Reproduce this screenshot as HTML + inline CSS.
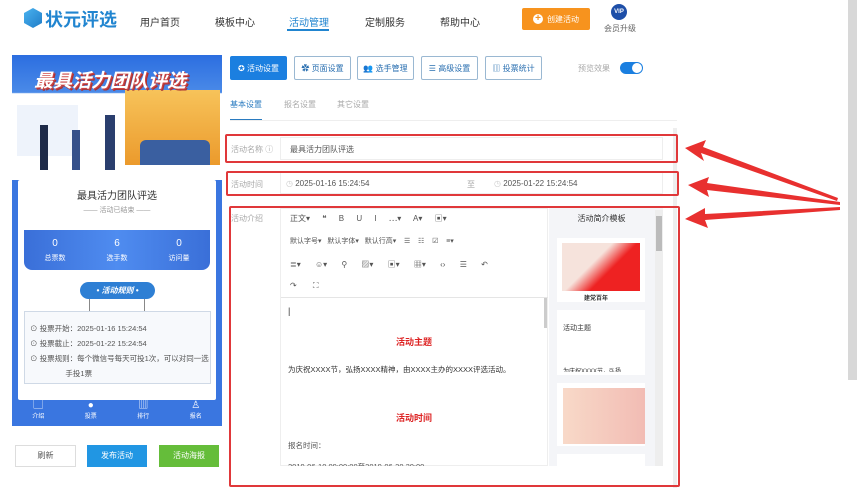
<!DOCTYPE html>
<html><head><meta charset="utf-8"><style>
*{box-sizing:border-box;margin:0;padding:0}
body{width:857px;height:500px;overflow:hidden;background:#fff;font-family:"Liberation Sans","Noto Sans CJK SC",sans-serif;position:relative;color:#333}
.a{position:absolute}
.nav{font-size:10px;color:#333}
.tb{position:absolute;top:56px;height:24px;border:1px solid #9ab8d2;border-radius:2px;font-size:8px;color:#2a6fb0;display:flex;align-items:center;justify-content:center;gap:4px;background:#fff}
.rb{position:absolute;border:2px solid #e0383a;border-radius:2px}
.lbl{font-size:8px;color:#aaa}
.ed{font-size:8px;color:#555}
</style></head><body>
<div class="a" style="left:24px;top:8px;width:18px;height:20px;background:linear-gradient(135deg,#4ab3ef,#1f7cc8);clip-path:polygon(50% 0,100% 25%,100% 75%,50% 100%,0 75%,0 25%)"></div>
<div class="a" style="left:45px;top:6px;font-size:18px;font-weight:bold;color:#2185d0">状元评选</div>
<div class="a nav" style="left:140px;top:14px">用户首页</div>
<div class="a nav" style="left:215px;top:14px">模板中心</div>
<div class="a nav" style="left:289px;top:14px;color:#2185d0">活动管理</div>
<div class="a" style="left:287px;top:29px;width:42px;height:2px;background:#2185d0"></div>
<div class="a nav" style="left:365px;top:14px">定制服务</div>
<div class="a nav" style="left:440px;top:14px">帮助中心</div>
<div class="a" style="left:522px;top:8px;width:68px;height:22px;background:#f7931e;border-radius:2px;color:#fff;font-size:8px;display:flex;align-items:center;justify-content:center;gap:4px"><span style="width:10px;height:10px;border-radius:50%;background:#fff;color:#f7931e;font-size:10px;line-height:10px;text-align:center;font-weight:bold">+</span>创建活动</div>
<div class="a" style="left:611px;top:4px;width:16px;height:16px;border-radius:50%;background:#1e4fa8;color:#fff;font-size:6px;text-align:center;line-height:16px;font-weight:bold">VIP</div>
<div class="a" style="left:604px;top:23px;font-size:8px;color:#666">会员升级</div>
<div class="a" style="left:848px;top:0;width:9px;height:380px;background:#d8d8d8"></div>

<div class="a" style="left:12px;top:55px;width:210px;height:371px;background:#3a76e0"></div>
<div class="a" style="left:12px;top:55px;width:210px;height:125px;background:linear-gradient(180deg,#2c6ee0 0%,#4a8ae8 30%,#fff 31%)"></div>
<div class="a" style="left:125px;top:90px;width:95px;height:75px;background:linear-gradient(180deg,#f7c35a,#eb9a2c)"></div>
<div class="a" style="left:15px;top:103px;width:65px;height:55px;background:#eef3fb;border:2px solid #fff"></div>
<div class="a" style="left:34px;top:66px;font-size:19px;font-weight:bold;font-style:italic;color:#fff;text-shadow:1px 1px 0 #c44,2px 2px 0 #a33">最具活力团队评选</div>
<div class="a" style="left:40px;top:125px;width:8px;height:45px;background:#1e2a48"></div>
<div class="a" style="left:72px;top:130px;width:8px;height:40px;background:#35508a"></div>
<div class="a" style="left:105px;top:115px;width:10px;height:55px;background:#2a3e6e"></div>
<div class="a" style="left:140px;top:140px;width:70px;height:25px;background:#3a5fa0;border-radius:6px 6px 0 0"></div>
<div class="a" style="left:18px;top:180px;width:198px;height:220px;background:#fff;border-radius:2px"></div>
<div class="a" style="left:18px;top:187px;width:198px;text-align:center;font-size:10px;color:#333">最具活力团队评选</div>
<div class="a" style="left:18px;top:205px;width:198px;text-align:center;font-size:7px;color:#999">—— 活动已结束 ——</div>
<div class="a" style="left:24px;top:230px;width:186px;height:40px;background:linear-gradient(90deg,#3a6fd8,#4f8cf0,#3a6fd8);border-radius:0 0 8px 8px"></div>
<div class="a" style="left:24px;top:238px;width:186px;display:flex;color:#fff;font-size:10px;text-align:center"><div style="flex:1">0</div><div style="flex:1">6</div><div style="flex:1">0</div></div>
<div class="a" style="left:24px;top:253px;width:186px;display:flex;color:#fff;font-size:7px;text-align:center"><div style="flex:1">总票数</div><div style="flex:1">选手数</div><div style="flex:1">访问量</div></div>
<div class="a" style="left:80px;top:282px;width:75px;height:17px;background:#2e7fd4;border-radius:9px;color:#fff;font-size:8px;font-weight:bold;font-style:italic;text-align:center;line-height:17px">• 活动规则 •</div>
<div class="a" style="left:89px;top:299px;width:1px;height:12px;background:#888"></div>
<div class="a" style="left:144px;top:299px;width:1px;height:12px;background:#888"></div>
<div class="a" style="left:24px;top:311px;width:187px;height:73px;border:1px solid #cfd9e6;background:#f7f9fc"></div>
<div class="a" style="left:30px;top:321px;font-size:7.5px;color:#555;line-height:15px">⊙ 投票开始：2025-01-16 15:24:54<br>⊙ 投票截止：2025-01-22 15:24:54<br>⊙ 投票规则：每个微信号每天可投1次，可以对同一选<br>&nbsp;&nbsp;&nbsp;&nbsp;&nbsp;&nbsp;&nbsp;&nbsp;&nbsp;&nbsp;&nbsp;&nbsp;&nbsp;&nbsp;&nbsp;&nbsp;&nbsp;手投1票</div>
<div class="a" style="left:12px;top:401px;width:210px;display:flex;color:#fff;font-size:6px;text-align:center;line-height:10px">
<div style="flex:1"><span style="font-size:10px">▢</span><br>介绍</div><div style="flex:1"><span style="font-size:10px">●</span><br>投票</div><div style="flex:1"><span style="font-size:10px">▥</span><br>排行</div><div style="flex:1"><span style="font-size:10px">♙</span><br>报名</div></div>
<div class="a" style="left:15px;top:445px;width:61px;height:22px;border:1px solid #ddd;font-size:8px;color:#555;text-align:center;line-height:20px">刷新</div>
<div class="a" style="left:87px;top:445px;width:60px;height:22px;background:#2196e3;font-size:8px;color:#fff;text-align:center;line-height:22px">发布活动</div>
<div class="a" style="left:159px;top:445px;width:60px;height:22px;background:#65bd3a;font-size:8px;color:#fff;text-align:center;line-height:22px">活动海报</div>

<div class="tb" style="left:230px;width:57px;background:#1b7fe0;border-color:#1b7fe0;color:#fff">✪ 活动设置</div>
<div class="tb" style="left:294px;width:57px">✿ 页面设置</div>
<div class="tb" style="left:357px;width:57px">👥 选手管理</div>
<div class="tb" style="left:421px;width:57px">☰ 高级设置</div>
<div class="tb" style="left:485px;width:57px">▥ 投票统计</div>
<div class="a lbl" style="left:578px;top:63px">预览效果</div>
<div class="a" style="left:620px;top:62px;width:23px;height:12px;border-radius:6px;background:#1b7fe0"></div>
<div class="a" style="left:632px;top:63px;width:10px;height:10px;border-radius:50%;background:#fff"></div>
<div class="a" style="left:230px;top:99px;font-size:8px;color:#2a7bc0">基本设置</div>
<div class="a" style="left:284px;top:99px;font-size:8px;color:#aaa">报名设置</div>
<div class="a" style="left:337px;top:99px;font-size:8px;color:#aaa">其它设置</div>
<div class="a" style="left:230px;top:119px;width:32px;height:2px;background:#2a7bc0"></div>
<div class="a" style="left:230px;top:120px;width:447px;height:1px;background:#eee"></div>
<div class="a" style="left:673px;top:128px;width:4px;height:360px;background:#eee"></div>

<div class="a lbl" style="left:231px;top:144px">活动名称 ⓘ</div>
<div class="a" style="left:280px;top:137px;width:383px;height:23px;border:1px solid #eee"></div>
<div class="a ed" style="left:290px;top:144px">最具活力团队评选</div>
<div class="rb" style="left:225px;top:134px;width:453px;height:29px"></div>

<div class="a lbl" style="left:231px;top:179px">活动时间</div>
<div class="a" style="left:280px;top:172px;width:383px;height:22px;border:1px solid #eee"></div>
<div class="a ed" style="left:286px;top:179px"><span style="color:#ccc">◷</span> 2025-01-16 15:24:54</div>
<div class="a lbl" style="left:467px;top:179px">至</div>
<div class="a ed" style="left:494px;top:179px"><span style="color:#ccc">◷</span> 2025-01-22 15:24:54</div>
<div class="rb" style="left:226px;top:171px;width:453px;height:25px"></div>

<div class="a lbl" style="left:231px;top:213px">活动介绍</div>
<div class="a" style="left:280px;top:208px;width:268px;height:258px;border:1px solid #eee"></div>
<div class="a ed" style="left:290px;top:213px;word-spacing:10px">正文▾ ❝ B U I ⋯▾ A▾ ▣▾</div>
<div class="a ed" style="left:290px;top:236px;font-size:7px">默认字号▾ &nbsp; 默认字体▾ &nbsp; 默认行高▾ &nbsp;&nbsp; ☰ &nbsp;&nbsp; ☷ &nbsp;&nbsp; ☑ &nbsp;&nbsp; ≡▾</div>
<div class="a ed" style="left:290px;top:259px;word-spacing:12px">≣▾ ☺▾ ⚲ ▨▾ ▣▾ ▦▾ ‹› ☰ ↶</div>
<div class="a ed" style="left:290px;top:281px;word-spacing:14px">↷ ⛶</div>
<div class="a" style="left:281px;top:297px;width:267px;height:1px;background:#e5e5e5"></div>
<div class="a" style="left:544px;top:298px;width:3px;height:30px;background:#ccc"></div>
<div class="a" style="left:288px;top:306px;font-size:9px">|</div>
<div class="a" style="left:396px;top:335px;font-size:9px;font-weight:bold;color:#d22">活动主题</div>
<div class="a ed" style="left:288px;top:364px;font-size:7.5px;color:#333">为庆祝XXXX节，弘扬XXXX精神，由XXXX主办的XXXX评选活动。</div>
<div class="a" style="left:396px;top:411px;font-size:9px;font-weight:bold;color:#d22">活动时间</div>
<div class="a ed" style="left:288px;top:440px;font-size:7.5px">报名时间：</div>
<div class="a ed" style="left:288px;top:461px;font-size:7.5px;height:5px;overflow:hidden">2019-06-10 09:00:00至2019-06-20 20:00</div>

<div class="a" style="left:549px;top:208px;width:114px;height:258px;background:#f4f5f8"></div>
<div class="a" style="left:549px;top:213px;width:105px;text-align:center;font-size:8px;color:#333">活动简介模板</div>
<div class="a" style="left:557px;top:238px;width:88px;height:64px;background:#fff"></div>
<div class="a" style="left:562px;top:243px;width:78px;height:48px;background:linear-gradient(135deg,#f6e3dc 40%,#e22 60%)"></div>
<div class="a" style="left:584px;top:293px;font-size:6px;font-weight:bold">建党百年</div>
<div class="a" style="left:557px;top:310px;width:88px;height:65px;background:#fff"></div>
<div class="a" style="left:563px;top:323px;font-size:7px">活动主题</div>
<div class="a" style="left:563px;top:366px;font-size:6px;height:6px;overflow:hidden">为庆祝XXXX节，弘扬</div>
<div class="a" style="left:557px;top:383px;width:88px;height:63px;background:#fff"></div>
<div class="a" style="left:563px;top:388px;width:82px;height:56px;background:linear-gradient(90deg,#f8d9c8,#f2bcb4)"></div>
<div class="a" style="left:557px;top:454px;width:88px;height:12px;background:#fff"></div>
<div class="a" style="left:655px;top:210px;width:8px;height:256px;background:#eee"></div>
<div class="a" style="left:656px;top:216px;width:6px;height:35px;background:#bbb"></div>
<div class="rb" style="left:229px;top:206px;width:451px;height:281px"></div>

<svg class="a" style="left:0;top:0" width="857" height="500">
<g fill="#e8302f">
<polygon points="685,148 706,140 703,147 838,198 837,201 701,153 704,161"/>
<polygon points="688,185 709,177 707,183 840,202 840,205 707,190 709,197"/>
<polygon points="685,219 705,208 705,214 840,207 840,210 705,220 708,228"/>
</g></svg>
</body></html>
